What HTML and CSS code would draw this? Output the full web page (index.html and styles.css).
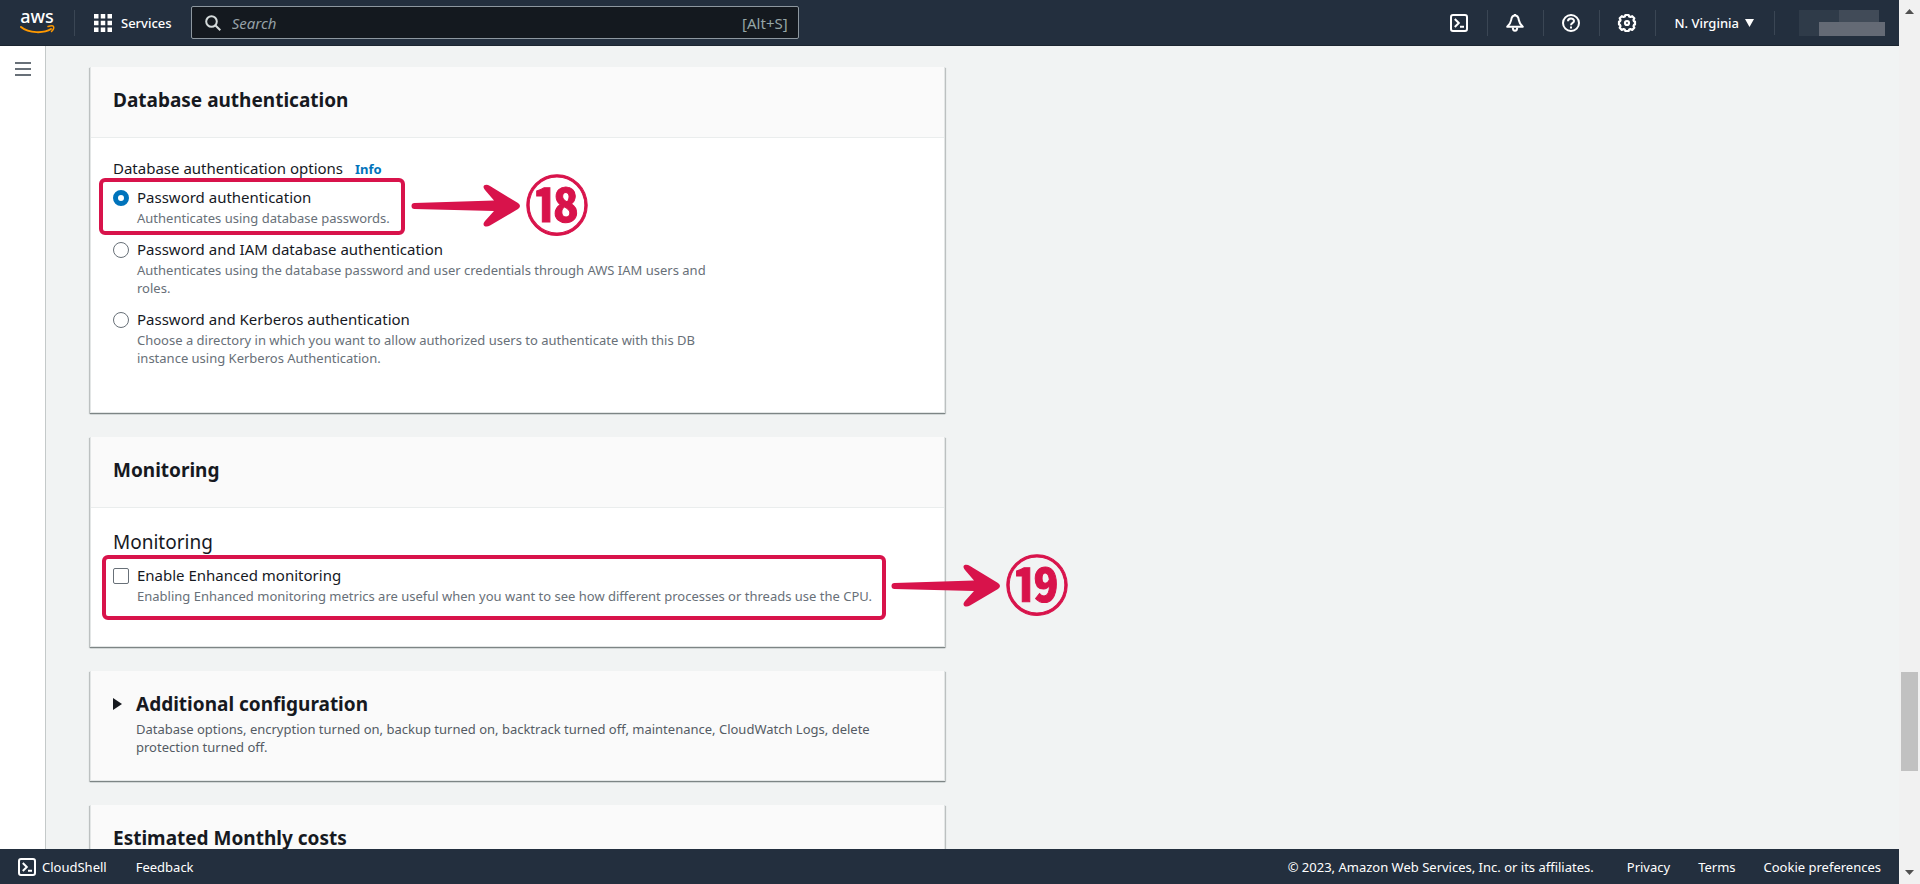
FILE: index.html
```html
<!DOCTYPE html>
<html lang="en">
<head>
<meta charset="utf-8">
<title>RDS - Create database</title>
<link rel="stylesheet" href="styles.css">
</head>
<body>
<div class="app">
  <header class="topbar">
    <a class="logo" href="#" aria-label="AWS home">
      <svg width="36" height="26" viewBox="0 0 36 26">
        <text class="logo-text" x="18" y="13" text-anchor="middle">aws</text>
        <path d="M2 17C10 23.500 25 23.500 32 19" fill="none" stroke="#f90" stroke-width="2" stroke-linecap="round"/>
        <path d="M29 16.500C31 15.800 34 15.500 34.500 16.500C35 17.500 34 20 32.500 21.500" fill="none" stroke="#f90" stroke-width="1.500" stroke-linecap="round"/>
      </svg>
    </a>
    <button class="services" type="button">
      <svg width="18" height="18" viewBox="0 0 18 18" fill="#fff"><path d="M0 0h4.500v4.500H0zM6.750 0h4.500v4.500h-4.500zM13.500 0H18v4.500h-4.500zM0 6.750h4.500v4.500H0zM6.750 6.750h4.500v4.500h-4.500zM13.500 6.750H18v4.500h-4.500zM0 13.500h4.500V18H0zM6.750 13.500h4.500V18h-4.500zM13.500 13.500H18V18h-4.500z"/></svg>
      <span>Services</span>
    </button>
    <label class="search">
      <svg width="16" height="16" viewBox="0 0 16 16" fill="none" stroke="#d5dbdb" stroke-width="2"><circle cx="6.500" cy="6.500" r="5.300"/><path d="M10.300 10.300l5 5"/></svg>
      <input type="text" placeholder="Search" aria-label="Search">
      <span class="shortcut">[Alt+S]</span>
    </label>
    <nav class="tools">
      <button class="tool" type="button" aria-label="CloudShell">
        <svg width="18" height="18" viewBox="0 0 18 18" fill="none" stroke="#fff" stroke-width="2"><rect x="1" y="1" width="16" height="16" rx="2"/><path d="M4.800 5l4 4-4 4M10 12.700h4"/></svg>
      </button>
      <button class="tool" type="button" aria-label="Notifications">
        <svg width="18" height="18" viewBox="0 0 18 18" fill="none" stroke="#fff" stroke-width="2" stroke-linejoin="round"><path d="M9 1.500C6.500 1.500 5.500 3.500 5.200 6C4.800 9 3.500 10.500 1.200 12.700H16.800C14.500 10.500 13.200 9 12.800 6C12.500 3.500 11.500 1.500 9 1.500z"/><path d="M9 0v2M6.800 13.500C6.800 17.800 11.200 17.800 11.200 13.500"/></svg>
      </button>
      <button class="tool" type="button" aria-label="Help">
        <svg width="18" height="18" viewBox="0 0 18 18" fill="none" stroke="#fff" stroke-width="2"><circle cx="9" cy="9" r="8"/><path d="M6 7.200C6 3.700 12 3.700 12 7C12 9 9 8.700 9 11.200M9 12.500v2"/></svg>
      </button>
      <button class="tool" type="button" aria-label="Settings">
        <svg width="18" height="18" viewBox="0 0 18 18" fill="none" stroke="#fff" stroke-width="2.200" stroke-linejoin="round"><path d="M7.400 1h3.200l.6 1.500 1.300.5 1.700-.8 2.100 2.100-.8 1.700.5 1.300 1 .3v2.800l-1 .4-.5 1.300.8 1.700-2.100 2.100-1.700-.8-1.300.5-.6 1.400H7.400l-.6-1.400-1.300-.5-1.700.8-2.100-2.100.8-1.700L2 10.800l-1-.4V7.600l1-.3L2.500 6l-.8-1.700 2.100-2.100 1.700.8 1.300-.5z"/><circle cx="9" cy="9" r="2"/></svg>
      </button>
      <button class="region" type="button">N. Virginia <svg width="9" height="8" viewBox="0 0 9 8" fill="#fff"><path d="M0 0h9L4.500 8z"/></svg></button>
      <div class="account" aria-hidden="true"><i></i><i></i><b></b></div>
    </nav>
  </header>

  <div class="middle">
    <aside class="rail">
      <button class="menu" type="button" aria-label="Open navigation"><i></i><i></i><i></i></button>
    </aside>
    <main class="content">
      <section class="card">
        <div class="card-head"><h2>Database authentication</h2></div>
        <div class="card-body">
          <p class="field-label"><span id="auth-label">Database authentication options</span> <a href="#">Info</a></p>
          <div class="options" role="radiogroup" aria-labelledby="auth-label">
            <div class="option marked-auth">
              <input type="radio" name="auth" id="auth-pw" checked>
              <div class="option-text">
                <label for="auth-pw">Password authentication</label>
                <p>Authenticates using database passwords.</p>
              </div>
              <div class="frame"></div>
              <div class="callout">
                <svg width="110" height="44" viewBox="0 0 110 44" fill="#d8134b"><path d="M3.500 19L83 16.500L74 6C70 1 75-.5 79 2L107 19Q111 22 107 25L79 41.500C75 44 70 42 74 37L83 27L3.500 25A3 3 0 0 1 3.500 19z"/></svg>
                <span class="step">⑱</span>
              </div>
            </div>
            <div class="option">
              <input type="radio" name="auth" id="auth-iam">
              <div class="option-text">
                <label for="auth-iam">Password and IAM database authentication</label>
                <p>Authenticates using the database password and user credentials through AWS IAM users and roles.</p>
              </div>
            </div>
            <div class="option">
              <input type="radio" name="auth" id="auth-krb">
              <div class="option-text">
                <label for="auth-krb">Password and Kerberos authentication</label>
                <p>Choose a directory in which you want to allow authorized users to authenticate with this DB instance using Kerberos Authentication.</p>
              </div>
            </div>
          </div>
        </div>
      </section>

      <section class="card">
        <div class="card-head"><h2>Monitoring</h2></div>
        <div class="card-body monitoring">
          <h3>Monitoring</h3>
          <div class="option marked-monitoring">
            <input type="checkbox" id="enhanced">
            <div class="option-text wide">
              <label for="enhanced">Enable Enhanced monitoring</label>
              <p>Enabling Enhanced monitoring metrics are useful when you want to see how different processes or threads use the CPU.</p>
            </div>
            <div class="frame"></div>
            <div class="callout">
              <svg width="110" height="44" viewBox="0 0 110 44" fill="#d8134b"><path d="M3.500 19L83 16.500L74 6C70 1 75-.5 79 2L107 19Q111 22 107 25L79 41.500C75 44 70 42 74 37L83 27L3.500 25A3 3 0 0 1 3.500 19z"/></svg>
              <span class="step">⑲</span>
            </div>
          </div>
        </div>
      </section>

      <section class="card expandable">
        <svg class="caret" width="9" height="12" viewBox="0 0 9 12" fill="#16191f"><path d="M0 0l9 6-9 6z"/></svg>
        <div>
          <h2>Additional configuration</h2>
          <p>Database options, encryption turned on, backup turned on, backtrack turned off, maintenance, CloudWatch Logs, delete protection turned off.</p>
        </div>
      </section>

      <section class="card">
        <div class="card-head"><h2>Estimated Monthly costs</h2></div>
      </section>
    </main>
  </div>

  <footer class="footer">
    <a class="shell" href="#">
      <svg width="18" height="18" viewBox="0 0 18 18" fill="none" stroke="#fff" stroke-width="2"><rect x="1" y="1" width="16" height="16" rx="2"/><path d="M4.800 5l4 4-4 4M10 12.700h4"/></svg>
      CloudShell</a>
    <a href="#">Feedback</a>
    <span class="copyright">© 2023, Amazon Web Services, Inc. or its affiliates.</span>
    <a class="legal first" href="#">Privacy</a>
    <a class="legal" href="#">Terms</a>
    <a class="legal" href="#">Cookie preferences</a>
  </footer>
</div>
<div class="scrollbar" aria-hidden="true">
  <svg width="9" height="5" viewBox="0 0 9 5" fill="#505050"><path d="M0 5L4.500 0 9 5z"/></svg>
  <div class="track"><div class="thumb"></div></div>
  <svg width="9" height="5" viewBox="0 0 9 5" fill="#505050"><path d="M0 0h9L4.500 5z"/></svg>
</div>
</body>
</html>
```
FILE: styles.css
```css
* { box-sizing: border-box; }

body {
  margin: 0;
  height: 100vh;
  display: flex;
  overflow: hidden;
  background: #f1f3f3;
  color: #16191f;
  font-family: "Noto Sans", "Open Sans", sans-serif;
  font-size: 15px;
  line-height: 24px;
}

h2, h3, p { margin: 0; }
a { color: #0073bb; text-decoration: none; }
button { padding: 0; border: 0; background: none; color: inherit; font: inherit; }
svg { display: block; flex: none; overflow: visible; }

.app { flex: 1; min-width: 0; display: flex; flex-direction: column; }

.topbar {
  flex: none;
  height: 46px;
  display: flex;
  align-items: center;
  background: #232f3e;
  border-bottom: 1px solid #1b2530;
  color: #fff;
  font-size: 13px;
  font-weight: 500;
}
.logo { padding: 0 19px; border-right: 1px solid #3a4654; }
.logo-text { fill: #fff; font-size: 18px; font-weight: 500; }
.services { display: flex; align-items: center; gap: 9px; padding: 0 19px; }
.search {
  width: 608px;
  height: 33px;
  display: flex;
  align-items: center;
  gap: 11px;
  padding: 0 10px 0 13px;
  background: #14191f;
  border: 1px solid #8d979f;
  border-radius: 2px;
}
.search input {
  flex: 1;
  min-width: 0;
  padding: 0;
  border: 0;
  outline: 0;
  background: none;
  color: #fff;
  font: italic 15px "Noto Sans", sans-serif;
}
.search input::placeholder { color: #95a0a6; opacity: 1; }
.shortcut { color: #95a5a6; font-size: 15px; font-weight: 400; }
.tools { margin-left: auto; display: flex; align-items: center; }
.tool { padding: 4px 19px 4px 18px; border-right: 1px solid #3a4654; }
.region {
  display: flex;
  align-items: center;
  gap: 6px;
  padding: 0 20px 0 18px;
  border-right: 1px solid #3a4654;
}
.account {
  width: 86px;
  height: 26px;
  margin: 0 14px 0 24px;
  display: grid;
  grid-template: 12px 14px / 20px 20px 40px 6px;
}
.account i { grid-area: 1 / 1 / 3 / 3; background: #2f3b49; }
.account i + i { grid-area: 1 / 3 / 2 / 4; background: #414b58; }
.account b { grid-area: 2 / 2 / 3 / 5; background: #646a75; }

.middle { flex: 1; min-height: 0; display: flex; }
.rail { flex: none; width: 46px; background: #fff; border-right: 1px solid #c4c9c9; }
.menu { display: grid; gap: 4px; margin: 16px 15px; }
.menu i { width: 16px; height: 2px; background: #687078; }

.content {
  flex: 1;
  min-width: 0;
  overflow: hidden;
  display: flex;
  flex-direction: column;
  gap: 24px;
  padding: 21px 44px 0;
}
.card {
  flex: none;
  width: 100%;
  max-width: 855px;
  background: #fff;
  border: 1px solid #e3e6e6;
  border-top: 0;
  box-shadow: 0 1px 1px #7d8585, 1px 1px 1px #c9cdcd, -1px 1px 1px #c9cdcd;
}
.card-head { padding: 18px 22px 22px; background: #fafafa; border-bottom: 1px solid #eaeded; }
.card h2 { font-size: 19px; line-height: 30px; font-weight: 700; }
.card-body { padding: 18px 22px 45px; }
.monitoring { padding: 21px 22px 41px; }
.monitoring h3 { margin-bottom: 8px; font-size: 19px; line-height: 26px; font-weight: 400; }
.field-label { margin-bottom: 4px; }
.field-label a { margin-left: 8px; font-size: 13px; font-weight: 700; }

.options { display: grid; gap: 10px; }
.option { position: relative; display: flex; gap: 8px; }
.option-text { max-width: 590px; }
.option-text.wide { max-width: none; }
.option-text label { display: block; }
.option-text p, .expandable p {
  color: #687078;
  font-size: 13px;
  line-height: 18px;
}
.option input {
  appearance: none;
  flex: none;
  width: 16px;
  height: 16px;
  margin: 5px 0 0;
  background: #fff;
  border: 1px solid #687078;
  border-radius: 2px;
}
.option input[type="radio"] { border-radius: 50%; }
.option input[type="radio"]:checked { border: 5px solid #0073bb; }

.frame {
  position: absolute;
  border: 4px solid #d8134b;
  border-radius: 6px;
}
.callout {
  position: absolute;
  display: flex;
  align-items: flex-start;
  gap: 4px;
}
.marked-auth .frame { left: -14px; top: -7px; width: 306px; height: 57px; }
.marked-auth .callout { left: 298px; top: -16px; }
.marked-monitoring .frame { left: -11px; top: -8px; width: 784px; height: 65px; }
.marked-monitoring .callout { left: 778px; top: -14px; }
.callout svg { margin-top: 15px; }
.step {
  color: #d8134b;
  font: bold 64px/64px "Noto Sans CJK JP", sans-serif;
  -webkit-text-stroke: 1px #d8134b;
}

.expandable { display: flex; gap: 14px; padding: 18px 22px 24px; background: #fafafa; }
.expandable p { margin-top: 1px; max-width: 750px; color: #545b64; }
.caret { margin-top: 9px; }

.footer {
  flex: none;
  height: 35px;
  display: flex;
  align-items: center;
  padding: 0 18px;
  background: #232f3e;
  color: #fff;
  font-size: 13px;
  font-weight: 400;
}
.footer a { color: #fff; }
.shell { display: flex; align-items: center; gap: 6px; margin-right: 29px; }
.copyright { margin-left: auto; }
.legal { margin-left: 28px; }
.legal.first { margin-left: 33px; }

.scrollbar {
  flex: none;
  width: 21px;
  display: flex;
  flex-direction: column;
  align-items: center;
  padding: 9px 0;
  background: #f1f1f1;
}
.track {
  flex: 1;
  width: 17px;
  display: grid;
  grid-template-rows: 658fr 99fr 99fr;
}
.thumb { grid-row: 2; background: #c1c1c1; }
```
